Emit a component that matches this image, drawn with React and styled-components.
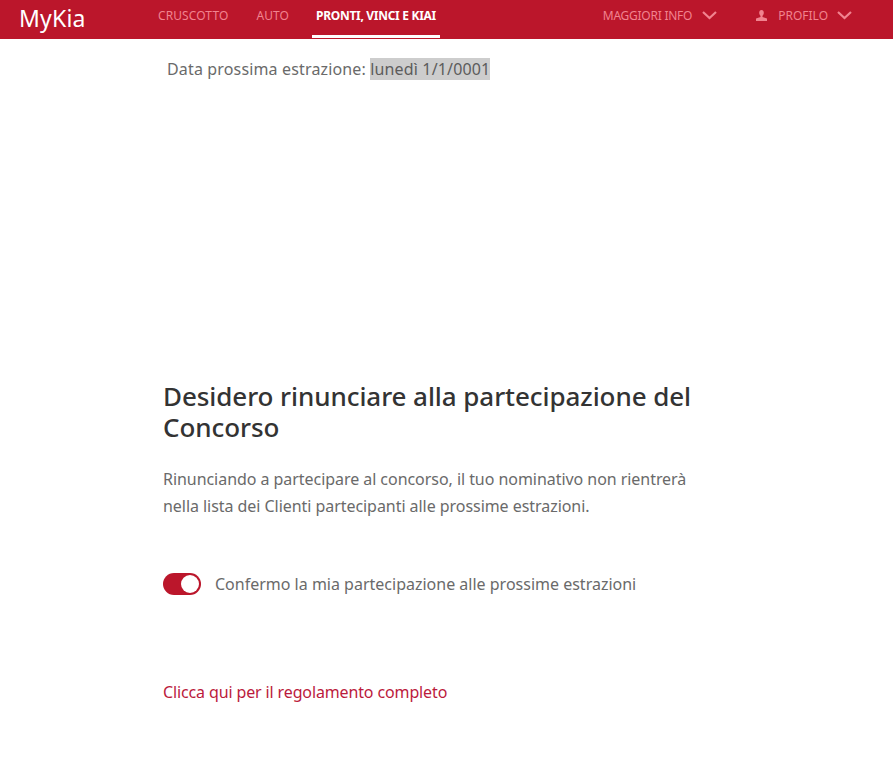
import React from 'react';
import styled, { createGlobalStyle } from 'styled-components';

const GlobalStyle = createGlobalStyle`
  html, body {
    margin: 0;
    padding: 0;
    background: #fff;
    font-family: 'Noto Sans', 'Open Sans', sans-serif;
  }
`;

const Header = styled.header`
  height: 39px;
  background: #bb162b;
  display: flex;
  align-items: stretch;
  padding: 0 0 0 19px;
`;

const Logo = styled.div`
  color: #fff;
  font-size: 23px;
  line-height: 36px;
  width: 135px;
  letter-spacing: 0.2px;
`;

const NavItem = styled.a`
  display: flex;
  align-items: flex-start;
  padding: 8px 4px 0;
  margin-right: ${p => p.$gap || 0}px;
  font-size: 12px;
  line-height: 16px;
  letter-spacing: ${p => (p.$active ? '-0.3px' : '0.1px')};
  color: ${p => (p.$active ? '#fff' : '#f1838f')};
  font-weight: ${p => (p.$active ? 700 : 400)};
  border-bottom: ${p => (p.$active ? '3px solid #fff' : 'none')};
  height: ${p => (p.$active ? '27px' : 'auto')};
  white-space: nowrap;
`;

const RightNav = styled.div`
  margin-left: auto;
  display: flex;
  align-items: flex-start;
  padding: 7px 41px 0 0;
`;

const RightItem = styled.span`
  display: flex;
  align-items: center;
  height: 16px;
  font-size: 12px;
  color: #f1838f;
  letter-spacing: ${p => p.$spacing || 0}px;
  margin-left: ${p => p.$gap || 0}px;
`;

const Chevron = styled.svg`
  width: 15px;
  height: 9px;
  margin-left: ${p => p.$gap}px;
  fill: none;
  stroke: #f1838f;
  stroke-width: 2.2;
`;

const PersonIcon = styled.svg`
  width: 11px;
  height: 11px;
  margin-right: 11px;
  fill: #f1838f;
`;

const Main = styled.main`
  display: flex;
  flex-direction: column;
  padding: 20px 0 0 163px;
`;

const DateLine = styled.p`
  margin: 0 0 0 4px;
  font-size: 16px;
  line-height: 20px;
  letter-spacing: 0.15px;
  color: #6a6a6a;
`;

const Highlight = styled.span`
  background: #cdcdcd;
  color: #5c5c5c;
`;

const Title = styled.h2`
  margin: 302px 0 0;
  width: 560px;
  font-size: 26px;
  line-height: 31px;
  font-weight: 500;
  color: #333;
  letter-spacing: -0.07px;
`;

const Description = styled.p`
  margin: 23px 0 0;
  width: 540px;
  font-size: 16px;
  line-height: 27px;
  letter-spacing: -0.05px;
  color: #6a6a6a;
`;

const ToggleRow = styled.div`
  display: flex;
  align-items: center;
  gap: 14px;
  margin-top: 52px;
  font-size: 16px;
  line-height: 24px;
  color: #6a6a6a;
`;

const Toggle = styled.span`
  position: relative;
  display: block;
  width: 38px;
  height: 22px;
  border-radius: 11px;
  background: #bb162b;

  &::after {
    content: '';
    position: absolute;
    top: 2px;
    right: 2px;
    width: 18px;
    height: 18px;
    border-radius: 50%;
    background: #fff;
  }
`;

const RulesLink = styled.a`
  margin-top: 86px;
  font-size: 16px;
  line-height: 20px;
  letter-spacing: -0.13px;
  color: #bb1a3c;
`;

export default function App() {
  return (
    <>
      <GlobalStyle />
      <Header>
        <Logo>MyKia</Logo>
        <NavItem $gap={20}>CRUSCOTTO</NavItem>
        <NavItem $gap={19}>AUTO</NavItem>
        <NavItem $active>PRONTI, VINCI E KIAI</NavItem>
        <RightNav>
          <RightItem $spacing={-0.25}>
            MAGGIORI INFO
            <Chevron $gap={10} viewBox="0 0 15 9"><path d="M1 1l6.5 6L14 1" /></Chevron>
          </RightItem>
          <RightItem $gap={39}>
            <PersonIcon viewBox="0 0 11 11">
              <path d="M5.5 0C7 0 7.8 1.2 7.8 2.8c0 1.3-.6 2.5-1.3 3v1.1L11 8.6V11H0V8.6l4.5-1.7V5.8c-.7-.5-1.3-1.7-1.3-3C3.2 1.2 4 0 5.5 0z" />
            </PersonIcon>
            PROFILO
            <Chevron $gap={9} viewBox="0 0 15 9"><path d="M1 1l6.5 6L14 1" /></Chevron>
          </RightItem>
        </RightNav>
      </Header>
      <Main>
        <DateLine>Data prossima estrazione: <Highlight>lunedì 1/1/0001</Highlight></DateLine>
        <Title>Desidero rinunciare alla partecipazione del Concorso</Title>
        <Description>
          Rinunciando a partecipare al concorso, il tuo nominativo non rientrerà nella lista dei Clienti partecipanti alle prossime estrazioni.
        </Description>
        <ToggleRow>
          <Toggle />
          Confermo la mia partecipazione alle prossime estrazioni
        </ToggleRow>
        <RulesLink>Clicca qui per il regolamento completo</RulesLink>
      </Main>
    </>
  );
}
